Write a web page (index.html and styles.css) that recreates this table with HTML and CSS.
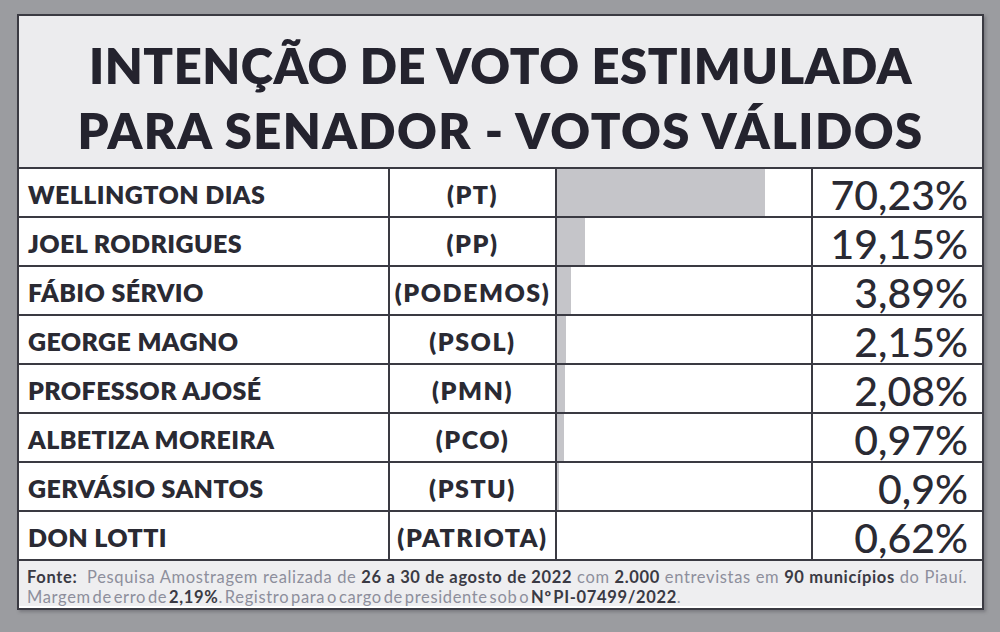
FILE: index.html
```html
<!DOCTYPE html>
<html lang="pt-BR">
<head>
<meta charset="utf-8">
<title>Intenção de voto estimulada para senador</title>
<link rel="stylesheet" href="styles.css">
</head>
<body>
<div class="panel">
  <div class="title">
    <div class="tline">INTENÇÃO DE VOTO ESTIMULADA</div>
    <div class="tline wide">PARA SENADOR - VOTOS VÁLIDOS</div>
  </div>
  <div class="row">
    <div class="name">WELLINGTON DIAS</div>
    <div class="party">(PT)</div>
    <div class="bar"><div class="fill" style="width:208px"></div></div>
    <div class="pct">70,23%</div>
  </div>
  <div class="row">
    <div class="name">JOEL RODRIGUES</div>
    <div class="party">(PP)</div>
    <div class="bar"><div class="fill" style="width:28px"></div></div>
    <div class="pct">19,15%</div>
  </div>
  <div class="row">
    <div class="name">FÁBIO SÉRVIO</div>
    <div class="party">(PODEMOS)</div>
    <div class="bar"><div class="fill" style="width:14px"></div></div>
    <div class="pct">3,89%</div>
  </div>
  <div class="row">
    <div class="name">GEORGE MAGNO</div>
    <div class="party">(PSOL)</div>
    <div class="bar"><div class="fill" style="width:9px"></div></div>
    <div class="pct">2,15%</div>
  </div>
  <div class="row">
    <div class="name">PROFESSOR AJOSÉ</div>
    <div class="party">(PMN)</div>
    <div class="bar"><div class="fill" style="width:8px"></div></div>
    <div class="pct">2,08%</div>
  </div>
  <div class="row">
    <div class="name">ALBETIZA MOREIRA</div>
    <div class="party">(PCO)</div>
    <div class="bar"><div class="fill" style="width:7px"></div></div>
    <div class="pct">0,97%</div>
  </div>
  <div class="row">
    <div class="name">GERVÁSIO SANTOS</div>
    <div class="party">(PSTU)</div>
    <div class="bar"><div class="fill" style="width:2px"></div></div>
    <div class="pct">0,9%</div>
  </div>
  <div class="row">
    <div class="name">DON LOTTI</div>
    <div class="party">(PATRIOTA)</div>
    <div class="bar"><div class="fill" style="width:0px"></div></div>
    <div class="pct">0,62%</div>
  </div>
  <div class="footer">
    <div class="fline"><b>Fonte:</b>&nbsp; Pesquisa Amostragem realizada de <b>26 a 30 de agosto de 2022</b> com <b>2.000</b> entrevistas em <b>90 municípios</b> do Piauí.</div>
    <div class="fline tight">Margem de erro de <b>2,19%</b>. Registro para o cargo de presidente sob o <b>Nº PI-07499/2022</b>.</div>
  </div>
</div>
</body>
</html>
```
FILE: styles.css
```css
html, body {
  margin: 0;
  padding: 0;
}
body {
  width: 1000px;
  height: 632px;
  background: #9b9ca0;
  overflow: hidden;
  font-family: Lato, "Liberation Sans", sans-serif;
  color: #2a2a33;
}
.panel {
  box-sizing: border-box;
  width: 967px;
  height: 596px;
  margin: 14px 0 0 17px;
  border: 2px solid #3a3a42;
  background: #ffffff;
  box-shadow: 2px 2px 3px rgba(60, 60, 70, 0.35);
}
.title {
  box-sizing: border-box;
  height: 151px;
  background: #ececee;
  padding-top: 17px;
  text-align: center;
  color: #24232e;
  font-weight: 800;
  font-size: 49px;
  line-height: 65px;
  letter-spacing: 0.5px;
}
.title .wide {
  letter-spacing: 1.4px;
}
.row {
  box-sizing: border-box;
  height: 49px;
  border-top: 2px solid #3a3a42;
  display: grid;
  grid-template-columns: 369px 167px 256px 1fr;
}
.row > div {
  box-sizing: border-box;
  height: 47px;
}
.name {
  display: flex;
  align-items: center;
  padding-left: 9px;
  font-weight: 800;
  font-size: 25px;
  letter-spacing: 0.4px;
  padding-top: 3px;
}
.party {
  border-left: 2px solid #3a3a42;
  display: flex;
  align-items: center;
  justify-content: center;
  font-weight: 800;
  font-size: 25px;
  letter-spacing: 1.5px;
  padding-top: 2px;
}
.bar {
  border-left: 2px solid #3a3a42;
  display: flex;
}
.fill {
  height: 100%;
  background: #c5c5c9;
}
.pct {
  border-left: 2px solid #3a3a42;
  display: flex;
  align-items: center;
  justify-content: flex-end;
  padding-right: 14px;
  font-size: 41px;
  font-weight: 500;
  padding-top: 3px;
}
.footer {
  box-sizing: border-box;
  height: 47px;
  border-top: 2px solid #3a3a42;
  background: #eeeef0;
  padding: 6px 0 0 8px;
  font-size: 16.5px;
  line-height: 20px;
  letter-spacing: 0.65px;
  color: #8d8e9c;
}
.footer b {
  color: #3a3a44;
  font-weight: 700;
}
.fline {
  white-space: nowrap;
}
.tight {
  word-spacing: -3px;
}
```
